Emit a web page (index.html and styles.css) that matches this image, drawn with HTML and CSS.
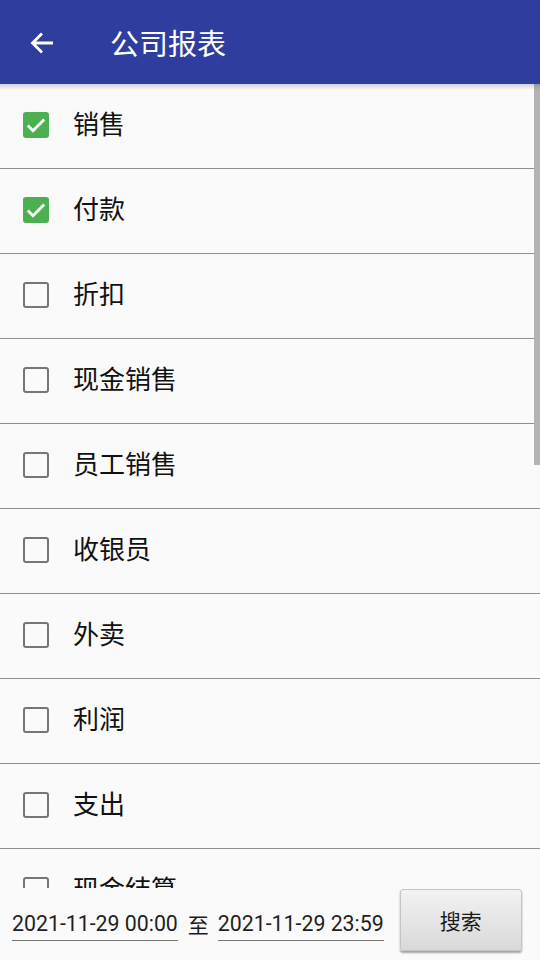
FILE: index.html
```html
<!DOCTYPE html>
<html lang="zh">
<head>
<meta charset="utf-8">
<link rel="stylesheet" href="styles.css">
</head>
<body>
<div class="app">
  <header class="bar">
    <svg class="back" width="26" height="26" viewBox="0 0 26 26"><path d="M24 13H3.5M13 3.5L3.5 13L13 22.5" fill="none" stroke="#fff" stroke-width="2.8"/></svg>
    <span class="title">公司报表</span>
  </header>
  <div class="listwrap">
    <ul class="list">
      <li class="row"><span class="cb on"><svg width="26" height="26" viewBox="0 0 26 26"><path d="M4.8 13.6l5.2 5.2L21.2 7.6" fill="none" stroke="#fff" stroke-width="2.8"/></svg></span><span class="lbl">销售</span></li>
      <li class="row"><span class="cb on"><svg width="26" height="26" viewBox="0 0 26 26"><path d="M4.8 13.6l5.2 5.2L21.2 7.6" fill="none" stroke="#fff" stroke-width="2.8"/></svg></span><span class="lbl">付款</span></li>
      <li class="row"><span class="cb"></span><span class="lbl">折扣</span></li>
      <li class="row"><span class="cb"></span><span class="lbl">现金销售</span></li>
      <li class="row"><span class="cb"></span><span class="lbl">员工销售</span></li>
      <li class="row"><span class="cb"></span><span class="lbl">收银员</span></li>
      <li class="row"><span class="cb"></span><span class="lbl">外卖</span></li>
      <li class="row"><span class="cb"></span><span class="lbl">利润</span></li>
      <li class="row"><span class="cb"></span><span class="lbl">支出</span></li>
      <li class="row"><span class="cb"></span><span class="lbl">现金结算</span></li>
    </ul>
    <div class="scroll"></div>
    <div class="shadow"></div>
  </div>
  <footer class="foot">
    <span class="date">2021-11-29 00:00</span>
    <span class="to">至</span>
    <span class="date">2021-11-29 23:59</span>
    <button class="btn">搜索</button>
  </footer>
</div>
</body>
</html>
```

FILE: styles.css
```css
* { box-sizing: border-box; }
html, body { margin: 0; padding: 0; }
body {
  width: 540px;
  height: 960px;
  background: #fafafa;
  font-family: Roboto, "Noto Sans CJK SC", sans-serif;
  color: #1a1a1a;
  overflow: hidden;
}
.app { display: flex; flex-direction: column; height: 960px; }
.bar {
  height: 84px;
  flex: none;
  background: #2f3e9e;
  display: flex;
  align-items: center;
  position: relative;
  z-index: 2;
}
.back { margin-left: 29px; margin-top: 1px; }
.title {
  margin-left: 55px;
  color: #fff;
  font-size: 29px;
  margin-top: -1px;
}
.listwrap {
  position: relative;
  height: 804px;
  flex: none;
  overflow: hidden;
}
.shadow {
  position: absolute;
  left: 0; right: 0; top: 0;
  height: 6px;
  background: linear-gradient(rgba(0,0,0,0.16), rgba(0,0,0,0));
}
.list { list-style: none; margin: 0; padding: 0; }
.row {
  height: 85px;
  border-bottom: 1px solid #8f8f8f;
  display: flex;
  align-items: center;
  padding-left: 23px;
  padding-bottom: 2px;
}
.cb {
  width: 26px;
  height: 26px;
  border: 2.6px solid #767676;
  border-radius: 3px;
  flex: none;
  display: flex;
  align-items: center;
  justify-content: center;
}
.cb.on { background: #4caf50; border: none; }
.lbl { margin-left: 24px; font-size: 26px; line-height: 1; color: #111; }
.scroll {
  position: absolute;
  right: 0;
  top: 0;
  width: 6px;
  height: 381px;
  background: #b3b3b3;
}
.foot {
  flex: 1;
  display: flex;
  align-items: center;
  padding-left: 12px;
  position: relative;
}
.date {
  font-size: 21.3px;
  line-height: 1;
  padding-bottom: 6px;
  border-bottom: 1.5px solid #757575;
  margin-top: 6px;
  color: #1f1f1f;
}
.to { font-size: 21px; margin: 0 9px 0 10px; }
.btn {
  margin-left: 16px;
  width: 122px;
  height: 62px;
  margin-top: -8px;
  border: 1px solid #c4c4c4;
  border-radius: 3px;
  background: linear-gradient(#f2f2f2, #d9d9d9);
  box-shadow: 0 2px 2px rgba(0,0,0,0.35);
  font-family: Roboto, "Noto Sans CJK SC", sans-serif;
  font-size: 21px;
  color: #1a1a1a;
  padding: 0;
}
```
